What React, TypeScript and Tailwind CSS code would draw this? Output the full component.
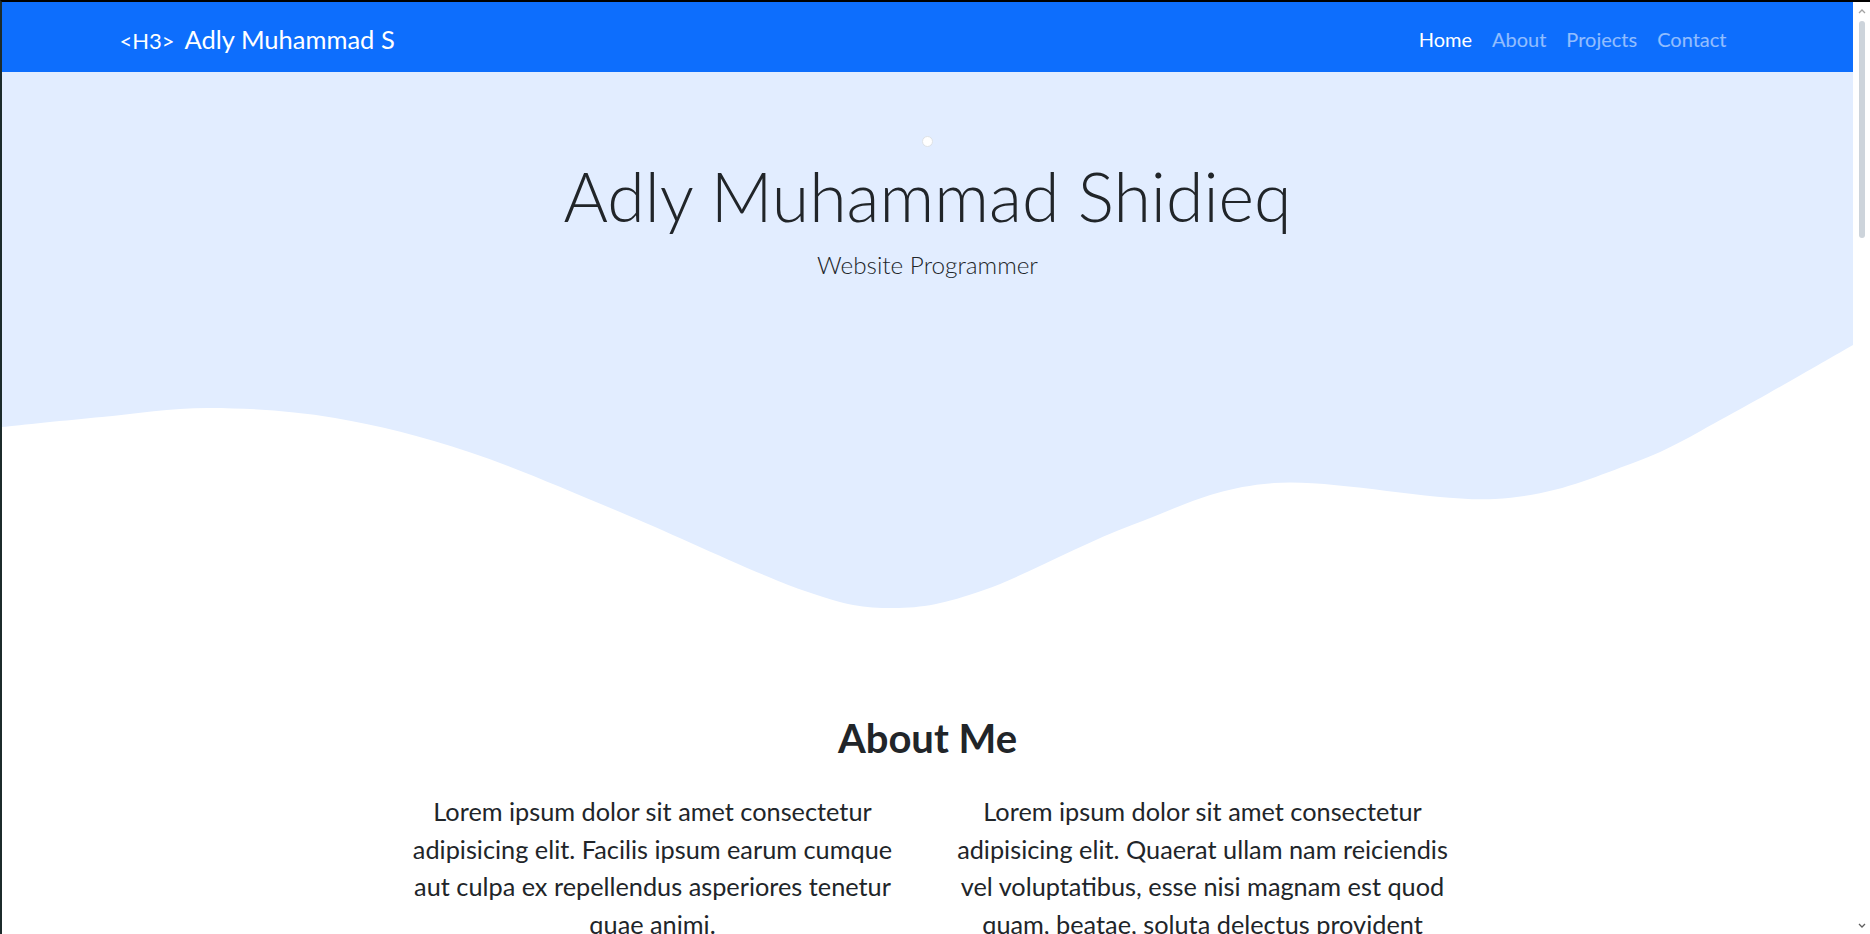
import { useMemo } from 'react'

/**
 * Portfolio landing page
 * navbar, jumbotron with wave, about section
 */

// wave outline, measured from the reference (px, relative to the svg box)
const wavePoints: [number, number][] = [
  [0, 87], [100, 77], [208, 68], [333, 78], [467, 112], [618, 172], [800, 250],
  [891, 268], [982, 250], [1130, 185], [1272, 143], [1493, 159], [1631, 123],
  [1731, 73], [1851, 5],
]

const WAVE_W = 1851
const WAVE_H = 280

const buildWave = (pts: [number, number][]) => {
  let d = `M${pts[0][0]},${pts[0][1]}`
  for (let i = 0; i < pts.length - 1; i++) {
    const p0 = pts[i - 1] || pts[i]
    const p1 = pts[i]
    const p2 = pts[i + 1]
    const p3 = pts[i + 2] || p2
    const c1x = p1[0] + (p2[0] - p0[0]) / 6
    const c1y = p1[1] + (p2[1] - p0[1]) / 6
    const c2x = p2[0] - (p3[0] - p1[0]) / 6
    const c2y = p2[1] - (p3[1] - p1[1]) / 6
    d += `C${c1x.toFixed(1)},${c1y.toFixed(1)},${c2x.toFixed(1)},${c2y.toFixed(1)},${p2[0]},${p2[1]}`
  }
  return d + `L${WAVE_W},${WAVE_H}L0,${WAVE_H}Z`
}

const navLinks = [
  { label: 'Home', active: true },
  { label: 'About', active: false },
  { label: 'Projects', active: false },
  { label: 'Contact', active: false },
]

const Navbar = () => (
  <nav className="h-[70px] bg-[#0d6efd] shrink-0">
    <div className="w-[1650px] h-full mx-auto px-[15px] flex items-center justify-between">
      <a className="flex items-baseline text-white pt-[4px] pl-[2px]">
        <span className="text-[22px]">&lt;H3&gt;</span>
        <span className="text-[25.5px] ml-[10px]">Adly Muhammad S</span>
      </a>
      <ul className="flex items-center pt-[3px] pr-[1px]">
        {navLinks.map((link) => (
          <li key={link.label}>
            <a className={`block px-[10px] text-[20px] ${link.active ? 'text-white' : 'text-white/55'}`}>
              {link.label}
            </a>
          </li>
        ))}
      </ul>
    </div>
  </nav>
)

const Jumbotron = () => {
  const wave = useMemo(() => buildWave(wavePoints), [])
  return (
    <section className="bg-[#e2edff] shrink-0">
      <div className="h-[268px] pt-[64px] flex flex-col items-center text-[#212529]">
        {/* profile picture (not loaded) */}
        <div className="w-[11px] h-[11px] rounded-full bg-white border border-[#dee2e6]" />
        <h1 className="mt-[8px] text-[68px] font-light leading-[82px]">Adly Muhammad Shidieq</h1>
        <p className="mt-[10px] text-[24.3px] font-light leading-[36px]">Website Programmer</p>
      </div>
      <svg className="block" width={WAVE_W} height={WAVE_H} viewBox={`0 0 ${WAVE_W} ${WAVE_H}`}>
        <path fill="#ffffff" d={wave} />
      </svg>
    </section>
  )
}

const About = () => (
  <section className="pt-[94px] text-[#212529]">
    <h2 className="text-center text-[40px] font-bold leading-[48px]">About Me</h2>
    <div className="mt-[31px] flex justify-center">
      <div className="w-[550px] px-[15px]">
        <p className="text-center text-[25.3px] leading-[37.5px]">
          Lorem ipsum dolor sit amet consectetur adipisicing elit. Facilis ipsum earum cumque aut culpa ex
          repellendus asperiores tenetur quae animi.
        </p>
      </div>
      <div className="w-[550px] px-[15px]">
        <p className="text-center text-[25.3px] leading-[37.5px]">
          Lorem ipsum dolor sit amet consectetur adipisicing elit. Quaerat ullam nam reiciendis vel
          voluptatibus, esse nisi magnam est quod quam, beatae, soluta delectus provident laboriosam.
        </p>
      </div>
    </div>
  </section>
)

// fake browser scrollbar on the right edge
const Scrollbar = () => (
  <div className="w-[17px] shrink-0 bg-white flex flex-col items-center">
    <div className="h-[19px] flex items-center justify-center">
      <svg width="8" height="5" viewBox="0 0 8 5">
        <path d="M1 4 L4 1 L7 4" fill="none" stroke="#a3a3a3" strokeWidth="1.3" />
      </svg>
    </div>
    <div className="w-[6px] h-[217px] rounded-full bg-[#cdd4db]" />
    <div className="flex-1" />
    <div className="h-[17px] flex items-center justify-center">
      <svg width="8" height="5" viewBox="0 0 8 5">
        <path d="M1 1 L4 4 L7 1" fill="none" stroke="#5f5f5f" strokeWidth="1.3" />
      </svg>
    </div>
  </div>
)

const App = () => {
  return (
    <div className="h-[934px] overflow-hidden flex bg-white border-t-2 border-t-black border-l-2 border-l-[#1c2b2b] font-['Lato',sans-serif]">
      <div className="flex-1 min-w-0 flex flex-col overflow-hidden">
        <Navbar />
        <Jumbotron />
        <About />
      </div>
      <Scrollbar />
    </div>
  )
}

export default App
